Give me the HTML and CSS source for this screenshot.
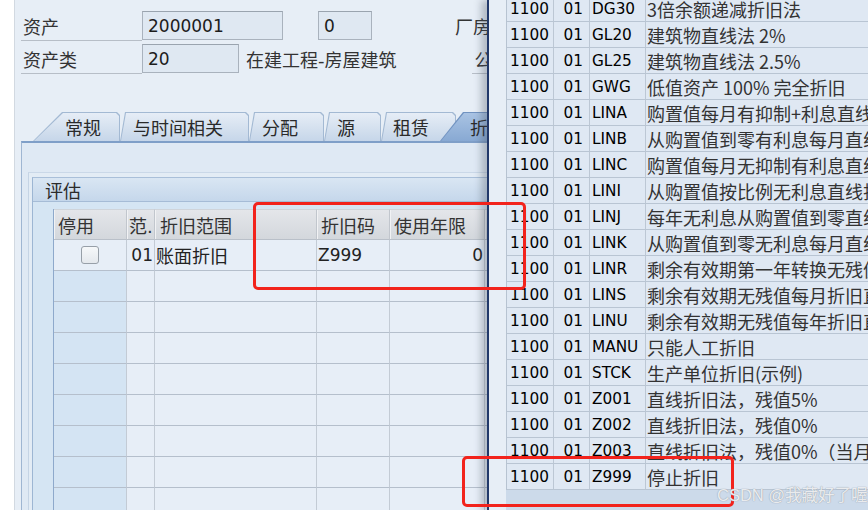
FILE: index.html
```html
<!DOCTYPE html>
<html lang="zh">
<head>
<meta charset="utf-8">
<link rel="stylesheet" href="styles.css">
</head>
<body>
<div class="screen">
  <div class="strip"></div>
  <div class="window">
    <div class="form">
      <div class="frow">
        <span class="lbl">资产</span>
        <span class="field f1">2000001</span>
        <span class="field f2">0</span>
        <span class="lbl-r r1">厂房</span>
      </div>
      <div class="frow">
        <span class="lbl">资产类</span>
        <span class="field f3">20</span>
        <span class="fdesc">在建工程-房屋建筑</span>
        <span class="lbl-r r2">公司</span>
      </div>
    </div>

    <div class="tabs">
      <div class="tab t1"><div class="in">常规</div></div>
      <div class="tab t2"><div class="in">与时间相关</div></div>
      <div class="tab t3"><div class="in">分配</div></div>
      <div class="tab t4"><div class="in">源</div></div>
      <div class="tab t5"><div class="in">租赁</div></div>
      <div class="tab t6 active"><div class="in">折旧</div></div>
    </div>

    <div class="panel">
      <div class="frame">
        <div class="group">
          <div class="ghead">评估</div>
          <div class="gbody">
            <div class="grid">
              <div class="hc">停用</div>
              <div class="hc">范.</div>
              <div class="hc">折旧范围</div>
              <div class="hc">折旧码</div>
              <div class="hc">使用年限</div>
              <div class="hc"></div>

              <div class="c c0 data"><span class="chk"></span></div>
              <div class="c right">01</div>
              <div class="c p2">账面折旧</div>
              <div class="c p0">Z999</div>
              <div class="c right">0</div>
              <div class="c"></div>

              <div class="c c0"></div><div class="c"></div><div class="c"></div><div class="c"></div><div class="c"></div><div class="c"></div>
              <div class="c c0"></div><div class="c"></div><div class="c"></div><div class="c"></div><div class="c"></div><div class="c"></div>
              <div class="c c0"></div><div class="c"></div><div class="c"></div><div class="c"></div><div class="c"></div><div class="c"></div>
              <div class="c c0"></div><div class="c"></div><div class="c"></div><div class="c"></div><div class="c"></div><div class="c"></div>
              <div class="c c0"></div><div class="c"></div><div class="c"></div><div class="c"></div><div class="c"></div><div class="c"></div>
              <div class="c c0"></div><div class="c"></div><div class="c"></div><div class="c"></div><div class="c"></div><div class="c"></div>
              <div class="c c0"></div><div class="c"></div><div class="c"></div><div class="c"></div><div class="c"></div><div class="c"></div>
              <div class="c c0"></div><div class="c"></div><div class="c"></div><div class="c"></div><div class="c"></div><div class="c"></div>
            </div>
          </div>
        </div>
      </div>
    </div>
  </div>

  <div class="popup">
    <div class="pwrap">
      <div class="pgrid">
        <div class="pc">1100</div><div class="pc num">01</div><div class="pc code">DG30</div><div class="pc desc">3倍余额递减折旧法</div>
        <div class="pc">1100</div><div class="pc num">01</div><div class="pc code">GL20</div><div class="pc desc">建筑物直线法 2%</div>
        <div class="pc">1100</div><div class="pc num">01</div><div class="pc code">GL25</div><div class="pc desc">建筑物直线法 2.5%</div>
        <div class="pc">1100</div><div class="pc num">01</div><div class="pc code">GWG</div><div class="pc desc">低值资产 100% 完全折旧</div>
        <div class="pc">1100</div><div class="pc num">01</div><div class="pc code">LINA</div><div class="pc desc">购置值每月有抑制+利息直线折旧</div>
        <div class="pc">1100</div><div class="pc num">01</div><div class="pc code">LINB</div><div class="pc desc">从购置值到零有利息每月直线折旧</div>
        <div class="pc">1100</div><div class="pc num">01</div><div class="pc code">LINC</div><div class="pc desc">购置值每月无抑制有利息直线折旧</div>
        <div class="pc">1100</div><div class="pc num">01</div><div class="pc code">LINI</div><div class="pc desc">从购置值按比例无利息直线折旧</div>
        <div class="pc">1100</div><div class="pc num">01</div><div class="pc code">LINJ</div><div class="pc desc">每年无利息从购置值到零直线折旧</div>
        <div class="pc">1100</div><div class="pc num">01</div><div class="pc code">LINK</div><div class="pc desc">从购置值到零无利息每月直线折旧</div>
        <div class="pc">1100</div><div class="pc num">01</div><div class="pc code">LINR</div><div class="pc desc">剩余有效期第一年转换无残值折旧</div>
        <div class="pc">1100</div><div class="pc num">01</div><div class="pc code">LINS</div><div class="pc desc">剩余有效期无残值每月折旧直线</div>
        <div class="pc">1100</div><div class="pc num">01</div><div class="pc code">LINU</div><div class="pc desc">剩余有效期无残值每年折旧直线</div>
        <div class="pc">1100</div><div class="pc num">01</div><div class="pc code">MANU</div><div class="pc desc">只能人工折旧</div>
        <div class="pc">1100</div><div class="pc num">01</div><div class="pc code">STCK</div><div class="pc desc">生产单位折旧(示例)</div>
        <div class="pc">1100</div><div class="pc num">01</div><div class="pc code">Z001</div><div class="pc desc">直线折旧法，残值5%</div>
        <div class="pc">1100</div><div class="pc num">01</div><div class="pc code">Z002</div><div class="pc desc">直线折旧法，残值0%</div>
        <div class="pc">1100</div><div class="pc num">01</div><div class="pc code">Z003</div><div class="pc desc">直线折旧法，残值0%（当月计提）</div>
        <div class="pc">1100</div><div class="pc num">01</div><div class="pc code">Z999</div><div class="pc desc">停止折旧</div>
      </div>
    </div>
  </div>

  <div class="mark m1"></div>
  <div class="mark m2"></div>
  <div class="wm">CSDN @我藏好了喔</div>
</div>
</body>
</html>
```

FILE: styles.css
```css
* { box-sizing: border-box; }
html, body { margin: 0; padding: 0; }
body {
  width: 868px;
  height: 510px;
  overflow: hidden;
  background: #ffffff;
  font-family: "DejaVu Sans", "Noto Sans CJK SC", sans-serif;
  font-size: 18px;
  color: #2b2b2b;
}
.screen {
  position: relative;
  display: flex;
  width: 868px;
  height: 510px;
  overflow: hidden;
}
.strip { width: 14px; flex: none; background: #ffffff; }
.window {
  flex: none;
  width: 473px;
  height: 510px;
  background: #e7eef6;
  border-left: 1px solid #d2d9e1;
  overflow: hidden;
}

/* form */
.form { padding: 11px 0 0 6px; }
.frow {
  display: flex;
  align-items: flex-start;
  height: 30px;
  margin-bottom: 3px;
  white-space: nowrap;
}
.lbl {
  flex: none;
  width: 121px;
  height: 30px;
  padding-left: 2px;
  border-bottom: 1px solid #b7bec7;
  display: flex;
  align-items: center;
  color: #333;
}
.field {
  flex: none;
  height: 29px;
  padding-left: 5px;
  display: flex;
  align-items: center;
  background: #dfe8f2;
  border: 1px solid #a9b2bd;
  border-top-color: #9aa4af;
  color: #1c1c1c;
  font-size: 17px;
}
.f1 { width: 141px; }
.f2 { width: 54px; margin-left: 35px; }
.f3 { width: 97px; }
.fdesc { flex: none; height: 30px; display: flex; align-items: center; margin-left: 7px; color: #333; }
.lbl-r { flex: none; height: 30px; display: flex; align-items: center; color: #333; }
.r1 { margin-left: 83px; }
.r2 {
  margin-left: 75px;
  padding-left: 3px;
  width: 60px;
  border-bottom: 1px solid #b7bec7;
}

/* tabs */
.tabs {
  display: flex;
  margin-top: 38px;
  padding-left: 18px;
  height: 29px;
}
.tab {
  --s: 5px;
  flex: none;
  height: 29px;
  padding: 1px 1px 0 1px;
  background: #a3b9d3;
  clip-path: polygon(0 100%, var(--s) 0, calc(100% - 3px) 0, 100% 3px, 100% 100%);
}
.tab .in {
  height: 100%;
  display: flex;
  align-items: center;
  background: linear-gradient(#e6edf6, #c6d6e9);
  clip-path: polygon(0 100%, var(--s) 0, calc(100% - 3px) 0, 100% 3px, 100% 100%);
  color: #2a2a2a;
  white-space: nowrap;
}
.t1 { --s: 29px; width: 87px; }
.t1 .in { padding-left: 31px; }
.t2 { width: 129px; }
.t2 .in { padding-left: 12px; }
.t3 { width: 75px; }
.t3 .in { padding-left: 12px; }
.t4 { width: 57px; }
.t4 .in { padding-left: 12px; }
.t5 { width: 75px; }
.t5 .in { padding-left: 11px; }
.t6 { --s: 23px; width: 100px; margin-left: -16px; z-index: 1; background: #7193c1; }
.t6 .in { padding-left: 29px; background: linear-gradient(#a9c3e3, #88a9d3); }

/* panel */
.panel {
  margin-left: 6px;
  height: 400px;
  background: #dfe9f4;
  border-top: 2px solid #7f9fc8;
  border-left: 1px solid #9fb6d2;
  padding-top: 29px;
}
.frame {
  margin-left: 6px;
  height: 400px;
  border-top: 1px solid #cad8e8;
  border-left: 1px solid #c5d4e5;
  padding: 4px 0 0 3px;
  background: #e3ecf5;
}
.group {
  height: 400px;
  border-top: 1px solid #a9bfd9;
  border-left: 1px solid #9db6d3;
  background: #d5e5f3;
}
.ghead {
  height: 24px;
  padding-left: 12px;
  display: flex;
  align-items: center;
  background: linear-gradient(#d9e6f3, #c5d7eb);
  border-bottom: 1px solid #a6bcd6;
  color: #2b2b2b;
}
.gbody { padding: 7px 0 0 20px; }
.grid {
  display: grid;
  grid-template-columns: 73px 28px 162px 73px 95px 80px;
  grid-auto-rows: 31px;
  border-left: 1px solid #8ea9cb;
  background: #e7eef7;
}
.hc {
  display: flex;
  align-items: center;
  padding-left: 4px;
  background: linear-gradient(#e4e6ea, #d3d7dc);
  border-top: 1px solid #cfd4da;
  border-right: 1px solid #c1c6cd;
  border-bottom: 1px solid #b9c0c9;
  box-shadow: inset 1px 0 0 #f1f2f4;
  color: #333;
  white-space: nowrap;
  overflow: hidden;
}
.hc:nth-child(2) { padding-left: 2px; }
.hc:nth-child(3) { padding-left: 5px; }
.c {
  display: flex;
  align-items: center;
  border-right: 1px solid #c3cbd5;
  border-bottom: 1px solid #b5bfcc;
  background: #e7eef7;
  color: #222;
  font-size: 17px;
  white-space: nowrap;
}
.c0 { background: #d4e4f3; }
.c0.data { background: #e7eef7; justify-content: center; }
.right { justify-content: flex-end; padding-right: 1px; }
.p2 { padding-left: 1px; font-size: 18px; }
.p0 { padding-left: 1px; }
.chk {
  width: 18px;
  height: 18px;
  border: 1px solid #979fa8;
  border-radius: 3px;
  background: linear-gradient(#f6f8fa, #e4e8ed);
}

/* popup */
.popup {
  position: absolute;
  z-index: 2;
  left: 487px;
  top: 0;
  width: 381px;
  height: 510px;
  border-left: 2px solid #22396a;
  background: #e7eef6;
  padding-left: 17px;
  box-shadow: -6px 0 7px rgba(70, 80, 95, 0.32);
}
.pwrap {
  height: 510px;
  background: #ccdaea;
  overflow: hidden;
}
.pgrid {
  margin-top: -4px;
  display: grid;
  grid-template-columns: 47px 36px 56px 240px;
  grid-auto-rows: 26px;
  border-left: 1px solid #b7c3d1;
  background: #dfe8f3;
}
.pc {
  display: flex;
  align-items: center;
  padding-left: 3px;
  border-right: 1px solid #bcc7d4;
  border-bottom: 1px solid #b9c5d3;
  font-size: 15.3px;
  color: #000;
  white-space: nowrap;
  overflow: hidden;
}
.pc.num { justify-content: flex-end; padding-right: 6px; padding-left: 0; }
.pc.code { padding-left: 2px; }
.pc.desc {
  padding-left: 1px;
  font-family: "Noto Sans CJK SC", "DejaVu Sans", sans-serif;
  font-size: 18px;
  color: #333;
  border-right: none;
}

/* annotations */
.mark {
  position: absolute;
  z-index: 3;
  border: 3px solid #f2231c;
  border-radius: 5px;
}
.m1 { left: 253px; top: 202px; width: 273px; height: 88px; }
.m2 { left: 462px; top: 456px; width: 272px; height: 51px; }
.wm {
  position: absolute;
  z-index: 3;
  left: 717px;
  top: 482px;
  font-family: "Liberation Sans", "Noto Sans CJK SC", sans-serif;
  font-size: 16.5px;
  color: rgba(255, 255, 255, 0.8);
  text-shadow: 0 0 1px #9ea7b2, 0 0 1px #9ea7b2;
  white-space: nowrap;
}
```
